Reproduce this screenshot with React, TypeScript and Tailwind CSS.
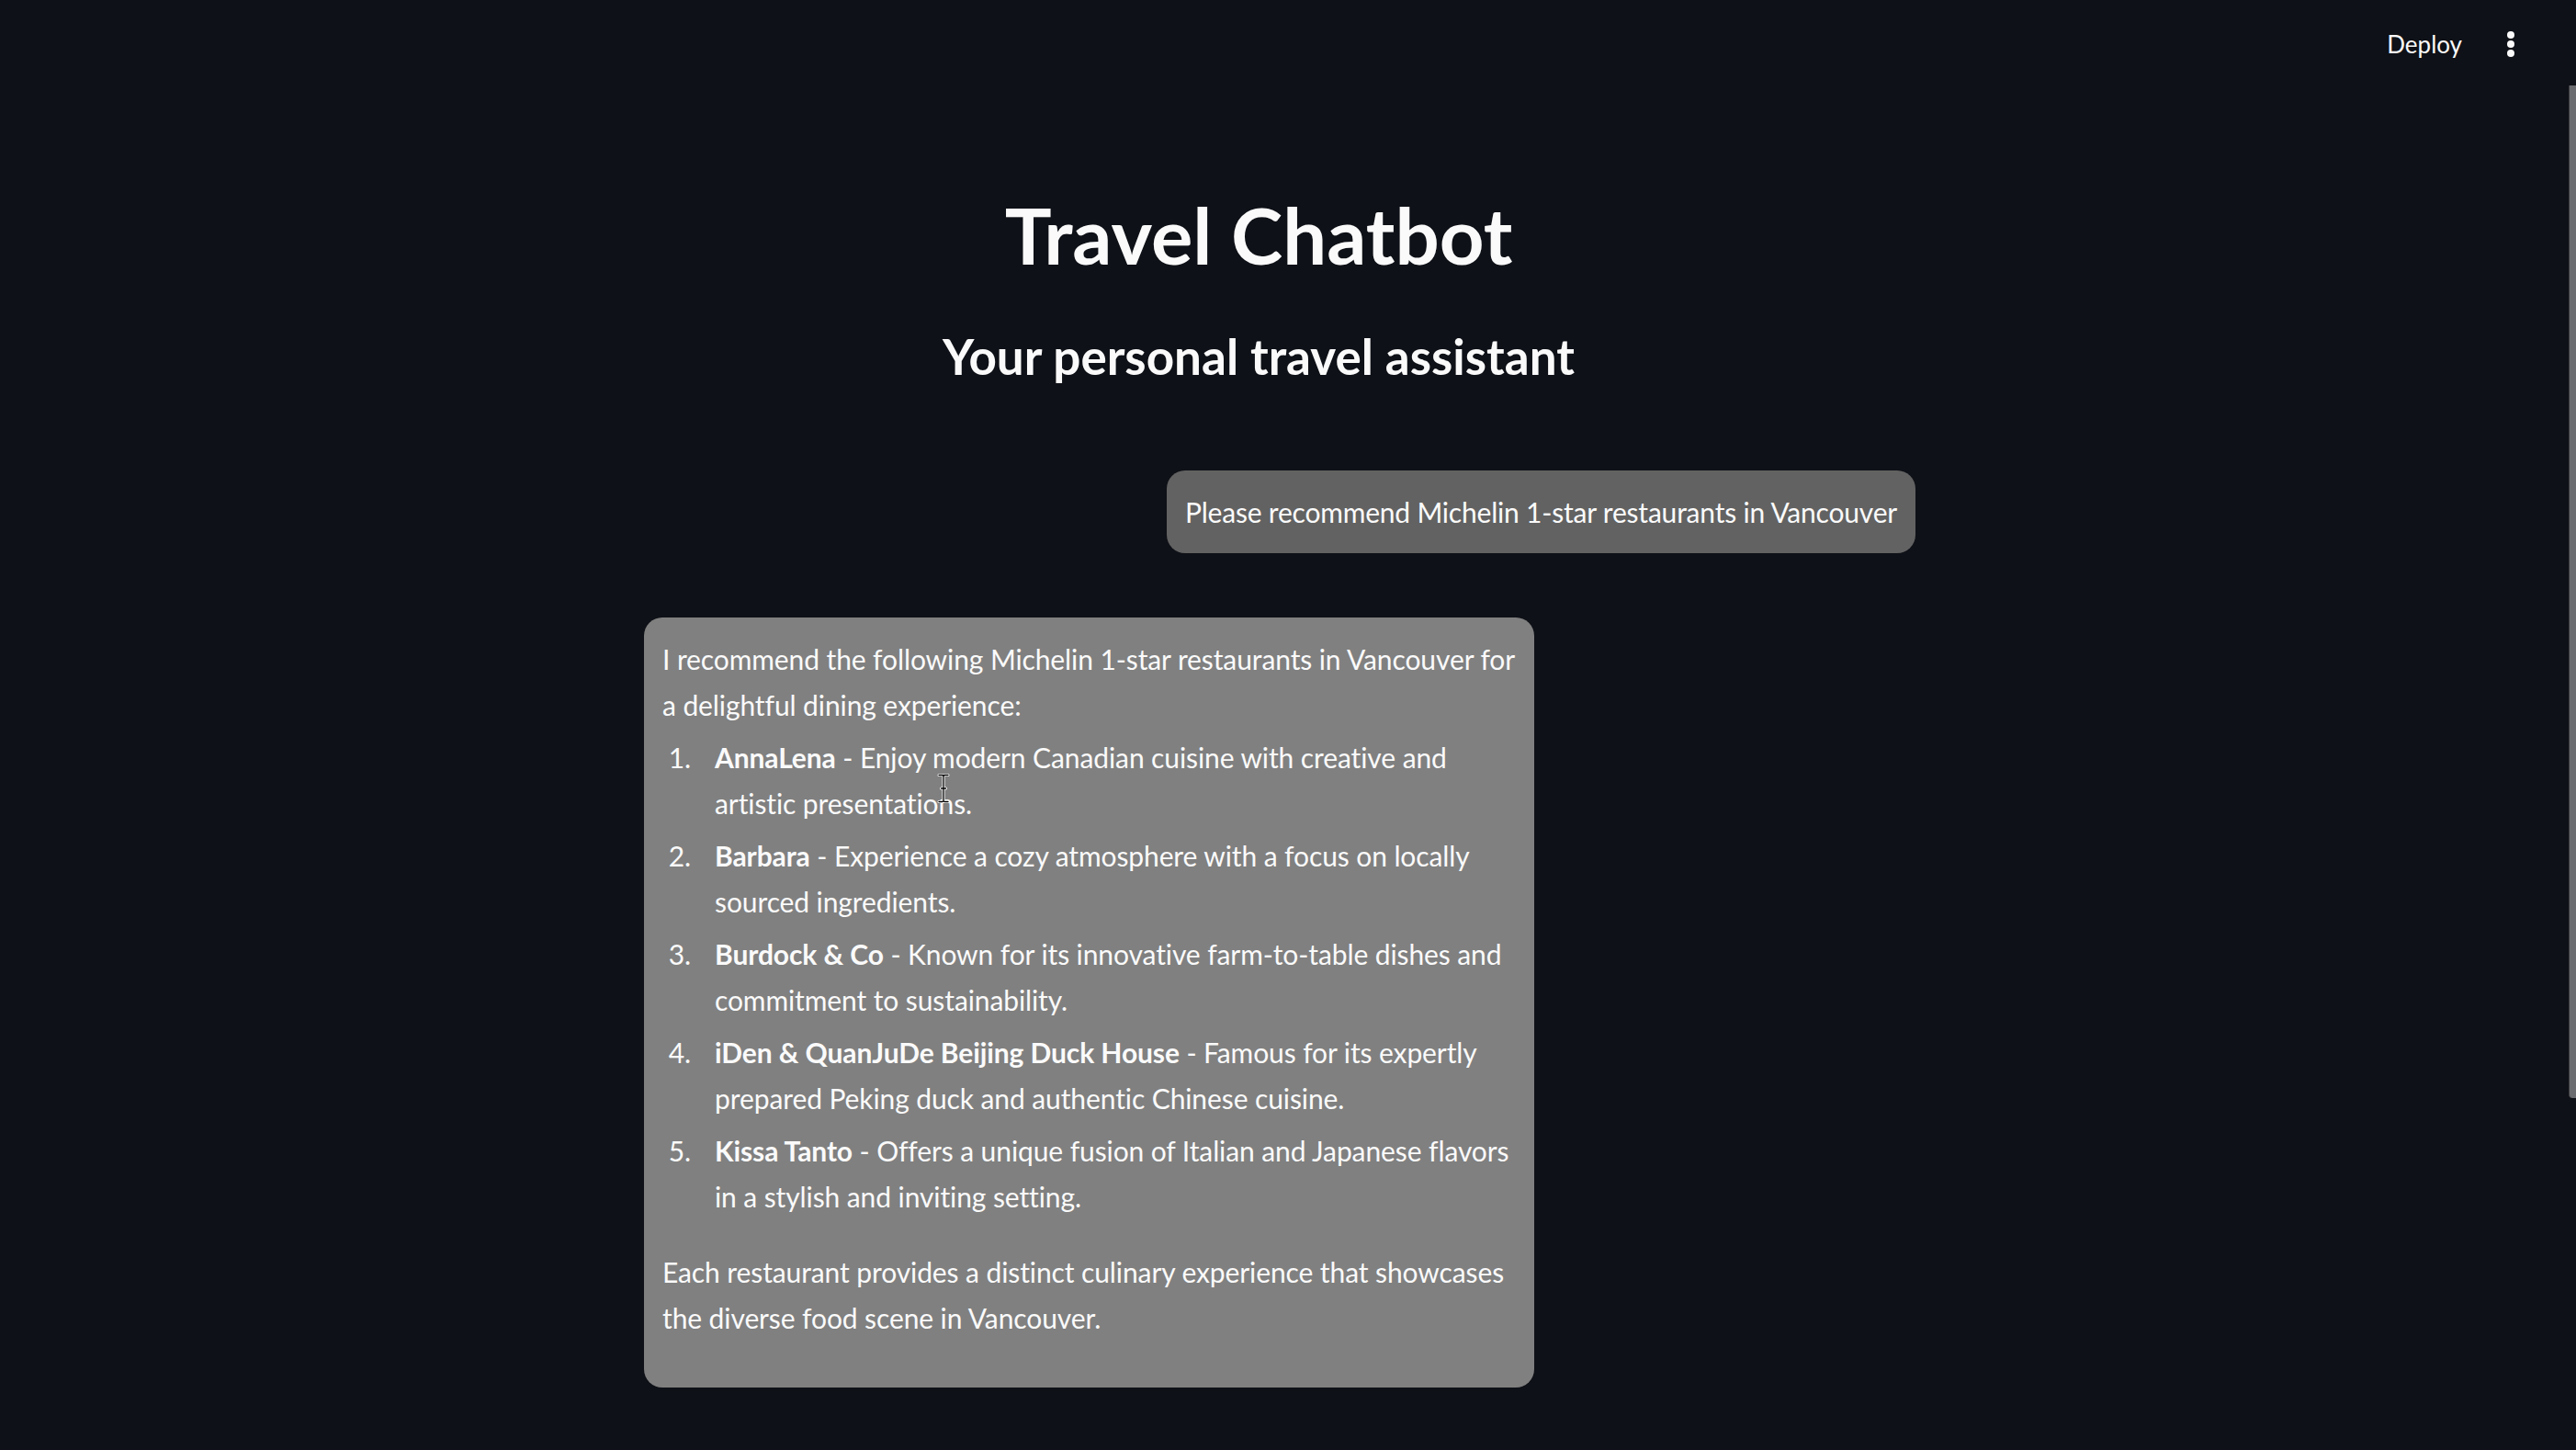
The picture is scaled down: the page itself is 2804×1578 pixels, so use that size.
import React from "react";

const items: { n: string; b: string; l1: string; l2: string }[] = [
  { n: "1.", b: "AnnaLena", l1: " - Enjoy modern Canadian cuisine with creative and", l2: "artistic presentations." },
  { n: "2.", b: "Barbara", l1: " - Experience a cozy atmosphere with a focus on locally", l2: "sourced ingredients." },
  { n: "3.", b: "Burdock & Co", l1: " - Known for its innovative farm-to-table dishes and", l2: "commitment to sustainability." },
  { n: "4.", b: "iDen & QuanJuDe Beijing Duck House", l1: " - Famous for its expertly", l2: "prepared Peking duck and authentic Chinese cuisine." },
  { n: "5.", b: "Kissa Tanto", l1: " - Offers a unique fusion of Italian and Japanese flavors", l2: "in a stylish and inviting setting." },
];

export default function App() {
  return (
    <div className="relative h-[1578px] w-full overflow-hidden bg-[#0e1117] text-[#fafafa] [font-family:Lato,sans-serif]">
      {/* header */}
      <header className="flex h-[96px] items-center justify-end pr-[66px]">
        <span className="text-[26px] leading-none text-[#fafafa]">Deploy</span>
        <div className="ml-[48px] flex h-[30px] w-[10px] items-center justify-center">
          <svg width="10" height="30" viewBox="0 0 10 30">
            <circle cx="5" cy="5" r="4" fill="#fafafa" />
            <circle cx="5" cy="15" r="4" fill="#fafafa" />
            <circle cx="5" cy="25" r="4" fill="#fafafa" />
          </svg>
        </div>
      </header>

      <main className="flex justify-center pr-[18px]">
        <div className="flex w-[1384px] flex-col">
          <h1 className="mt-[109px] h-[100px] pr-[46px] text-center text-[85px] font-bold leading-[100px]">
            Travel Chatbot
          </h1>
          <h3 className="mt-[48px] h-[70px] pr-[46px] text-center text-[53px] font-bold leading-[70px]">
            Your personal travel assistant
          </h3>

          <div className="mt-[89px] flex justify-end">
            <div className="whitespace-nowrap rounded-[20px] bg-[#626262] px-[20px] py-[20px] text-[30px] leading-[50px] tracking-[-0.2px]">
              Please recommend Michelin 1-star restaurants in Vancouver
            </div>
          </div>

          <div className="mt-[70px] flex justify-start">
            <div className="w-[969px] rounded-[20px] bg-[#808080] px-[20px] pt-[20px] pb-[51px] text-[30px] leading-[50px] tracking-[-0.1px]">
              <p className="whitespace-nowrap">
                I recommend the following Michelin 1-star restaurants in Vancouver for
                <br />
                a delightful dining experience:
              </p>
              <ol className="mt-[7px] flex flex-col gap-[7px]">
                {items.map((it) => (
                  <li key={it.n} className="flex">
                    <span className="w-[57px] shrink-0 pr-[26px] text-right">{it.n}</span>
                    <span className="whitespace-nowrap">
                      <b className="font-bold">{it.b}</b>
                      {it.l1}
                      <br />
                      {it.l2}
                    </span>
                  </li>
                ))}
              </ol>
              <p className="mt-[32px] whitespace-nowrap">
                Each restaurant provides a distinct culinary experience that showcases
                <br />
                the diverse food scene in Vancouver.
              </p>
            </div>
          </div>
        </div>
      </main>

      {/* text cursor */}
      <svg className="absolute left-[1020px] top-[842px]" width="14" height="32" viewBox="0 0 14 32">
        <path d="M2 1.5h3.5c.8 0 1.3.5 1.5 1 .2-.5.7-1 1.5-1H12M2 30.5h3.5c.8 0 1.3-.5 1.5-1 .2.5.7 1 1.5 1H12M7 2.5v27M4.5 16h5" fill="none" stroke="#ffffff" strokeWidth="3" strokeLinecap="round" />
        <path d="M2 1.5h3.5c.8 0 1.3.5 1.5 1 .2-.5.7-1 1.5-1H12M2 30.5h3.5c.8 0 1.3-.5 1.5-1 .2.5.7 1 1.5 1H12M7 2.5v27M4.5 16h5" fill="none" stroke="#000000" strokeWidth="1.3" strokeLinecap="round" />
      </svg>

      {/* scrollbar */}
      <div className="absolute right-0 top-[93px] h-[1102px] w-[8px] rounded-bl-[4px] border-l border-[#3a3b3f] bg-[#6b6c70]" />
    </div>
  );
}
